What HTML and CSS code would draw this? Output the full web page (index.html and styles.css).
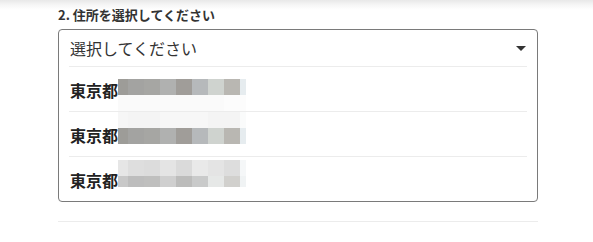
FILE: index.html
```html
<!DOCTYPE html>
<html lang="ja">
<head>
<meta charset="utf-8">
<link rel="stylesheet" href="styles.css">
</head>
<body>
<div class="page">
  <div class="field">
    <div class="label">2. 住所を選択してください</div>
    <div class="select">
      <div class="select-head">
        <span class="placeholder">選択してください</span>
        <span class="caret"></span>
      </div>
      <ul class="options">
        <li class="option"><span class="pref">東京都</span><span class="mosaic m1"></span></li>
        <li class="option"><span class="pref">東京都</span><span class="mosaic m2"></span></li>
        <li class="option"><span class="pref">東京都</span><span class="mosaic m3"></span></li>
      </ul>
    </div>
    <div class="divider"></div>
  </div>
</div>
</body>
</html>
```

FILE: styles.css
```css
html, body {
  margin: 0;
  padding: 0;
}
body {
  background: linear-gradient(#e8e8e8, #f6f6f6 5px, #ffffff 10px) no-repeat;
  background-color: #fff;
  font-family: "Noto Sans CJK JP", "Noto Sans", sans-serif;
  color: #333;
}
.page {
  padding: 6px 0 0 58px;
}
.field {
  width: 480px;
}
.label {
  font-size: 13px;
  font-weight: bold;
  line-height: 18px;
  height: 18px;
  color: #333;
  margin-bottom: 5px;
}
.select {
  border: 1px solid #7a7a7a;
  border-radius: 4px;
  background: #fff;
}
.select-head {
  height: 36px;
  margin: 0 10px;
  display: flex;
  align-items: center;
  justify-content: space-between;
}
.placeholder {
  font-size: 16px;
  line-height: 20px;
  color: #333;
  padding-left: 1px;
  margin-top: -1px;
}
.caret {
  width: 0;
  height: 0;
  border-left: 5px solid transparent;
  border-right: 5px solid transparent;
  border-top: 5px solid #333;
  margin-right: 1px;
  margin-top: 1px;
}
.options {
  list-style: none;
  margin: 0 10px;
  padding: 0;
}
.option {
  border-top: 1px solid #ececec;
  height: 44px;
  display: flex;
  align-items: center;
  position: relative;
}
.pref {
  font-size: 16px;
  font-weight: bold;
  line-height: 20px;
  color: #222;
  padding-left: 1px;
  margin-top: 1px;
}
.mosaic {
  width: 128px;
  height: 32px;
  background-repeat: no-repeat;
  background-size: 100% 16px, 100% 16px;
  background-position: 0 0, 0 16px;
}
.m1 {
  align-self: flex-end;
  background-image:
    linear-gradient(to right, #9d9c98 0 10px, #a3a3a1 10px 26px, #a6a6a3 26px 42px, #b0b1b0 42px 58px, #a09d99 58px 74px, #b6b9bb 74px 90px, #cfd3cf 90px 106px, #b9b7b2 106px 122px, #e6ecef 122px 128px),
    linear-gradient(to right, #fafafa 0 106px, #fcfcfc 106px 128px);
}
.m2 {
  align-self: flex-start;
  background-image:
    linear-gradient(to right, #f6f6f6 0 10px, #f4f4f4 10px 42px, #f7f7f7 42px 90px, #f4f4f4 90px 122px, #fafbfb 122px 128px),
    linear-gradient(to right, #9d9c98 0 10px, #a3a3a1 10px 26px, #a6a6a3 26px 42px, #b0b1b0 42px 58px, #a09d99 58px 74px, #b6b9bb 74px 90px, #cfd3cf 90px 106px, #b9b7b2 106px 122px, #e6ecef 122px 128px);
}
.m3 {
  align-self: flex-start;
  margin-top: 3px;
  height: 27px;
  background-size: 100% 16px, 100% 11px;
  background-image:
    linear-gradient(to right, #e6e6e6 0 10px, #dedede 10px 26px, #dcdcdc 26px 42px, #e4e4e4 42px 58px, #dadada 58px 74px, #e9e9e9 74px 90px, #e4e4e4 90px 106px, #dddddd 106px 122px, #f5f7f8 122px 128px),
    linear-gradient(to right, #c8c8c8 0 10px, #bdbdbd 10px 26px, #bfbfbe 26px 42px, #cfcfcf 42px 58px, #bcbcbb 58px 74px, #c9caca 74px 90px, #e6e8e7 90px 106px, #d1d0cd 106px 122px, #f0f3f4 122px 128px);
}
.divider {
  margin-top: 19px;
  border-top: 1px solid #ececec;
}
```
